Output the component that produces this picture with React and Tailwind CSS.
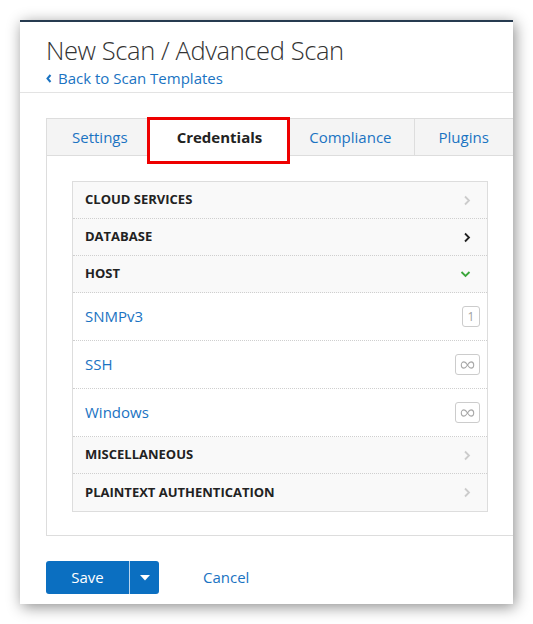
import React from 'react';

const font = { fontFamily: '"Open Sans", "Noto Sans", sans-serif' };

const ChevronRight = ({ color }) => (
  <svg width="8" height="11" viewBox="0 0 8 11" className="block">
    <polyline points="2,1.5 6,5.5 2,9.5" fill="none" stroke={color} strokeWidth="1.8" />
  </svg>
);

const ChevronDown = () => (
  <svg width="11" height="8" viewBox="0 0 11 8" className="block">
    <polyline points="1.5,2 5.5,6 9.5,2" fill="none" stroke="#3aa63a" strokeWidth="1.8" />
  </svg>
);

const Infinity = () => (
  <svg width="15" height="8" viewBox="0 0 16 9" className="block">
    <path
      d="M8 4.5 C6.5 2 5.5 1 4 1 C2.2 1 1 2.5 1 4.5 C1 6.5 2.2 8 4 8 C5.5 8 6.5 7 8 4.5 C9.5 2 10.5 1 12 1 C13.8 1 15 2.5 15 4.5 C15 6.5 13.8 8 12 8 C10.5 8 9.5 7 8 4.5 Z"
      fill="none"
      stroke="#a8a8a8"
      strokeWidth="1.2"
    />
  </svg>
);

const sections = [
  { type: 'head', label: 'CLOUD SERVICES', icon: 'off' },
  { type: 'head', label: 'DATABASE', icon: 'on' },
  { type: 'head', label: 'HOST', icon: 'open' },
  { type: 'item', label: 'SNMPv3', badge: '1' },
  { type: 'item', label: 'SSH', badge: 'inf' },
  { type: 'item', label: 'Windows', badge: 'inf' },
  { type: 'head', label: 'MISCELLANEOUS', icon: 'off' },
  { type: 'head', label: 'PLAINTEXT AUTHENTICATION', icon: 'off', last: true },
];

const tabs = [
  { label: 'Settings', pad: 'pl-[25px] pr-[20px]' },
  { label: 'Credentials', pad: 'pl-[28px] pr-[27px]', active: true },
  { label: 'Compliance', pad: 'pl-[19px] pr-[22px]' },
  { label: 'Plugins', pad: 'pl-[24px] pr-[25px]' },
];

export default function App() {
  return (
    <div className="w-[533px] h-[624px] bg-white p-5" style={font}>
      <div className="h-full bg-white border-t-2 border-[#263b50] shadow-[2px_3px_14px_rgba(0,0,0,0.45)] overflow-hidden flex flex-col">
        <div className="pl-[26px] pt-[10px] pb-[4px] border-b border-[#e3e3e3]">
          <h1 className="text-[25.5px] font-light text-[#333] leading-[36px] tracking-[-0.4px]">New Scan / Advanced Scan</h1>
          <a className="flex items-center gap-[6px] text-[15px] text-[#1a73c2] leading-[20px]">
            <svg width="6" height="9" viewBox="0 0 6 9" className="block">
              <polyline points="4.5,1 1.5,4.5 4.5,8" fill="none" stroke="#1a73c2" strokeWidth="2" />
            </svg>
            Back to Scan Templates
          </a>
        </div>

        <div className="pl-[26px] pt-[25px]">
          <div className="flex w-[520px] border-t border-l border-[#dddddd] bg-[#f4f4f4]">
            {tabs.map((t) => (
              <div
                key={t.label}
                className={
                  t.active
                    ? 'relative h-[37px] flex items-center bg-white text-[15px] font-bold text-[#222] border-r border-[#dddddd] ' + t.pad
                    : 'h-[37px] flex items-center text-[15px] text-[#1a73c2] border-r border-b border-[#dddddd] ' + t.pad
                }
              >
                {t.label}
                {t.active && (
                  <div className="absolute left-[-2px] right-[-1px] top-[-2px] bottom-[-8px] border-[3px] border-[#ee0000]" />
                )}
              </div>
            ))}
            <div className="flex-1 border-b border-[#dddddd]" />
          </div>

          <div className="w-[520px] border-l border-b border-[#dddddd] pl-[25px] pt-[25px] pb-[23px]">
            <div className="w-[416px] border border-[#dddddd]">
              {sections.map((s) => {
                const divider = s.last ? '' : ' border-b border-dotted border-[#cfcfcf]';
                if (s.type === 'head') {
                  return (
                    <div key={s.label} className={'h-[37px] bg-[#f9f9f9] flex items-center justify-between pl-[12px] pr-[16px] text-[13px] font-bold text-[#222]' + divider}>
                      <span>{s.label}</span>
                      {s.icon === 'open' ? (
                        <ChevronDown />
                      ) : (
                        <ChevronRight color={s.icon === 'on' ? '#222' : '#cccccc'} />
                      )}
                    </div>
                  );
                }
                return (
                  <div key={s.label} className={'h-[48px] bg-white flex items-center justify-between pl-[12px] pr-[7px] text-[15px] text-[#1a73c2]' + divider}>
                    <span>{s.label}</span>
                    {s.badge === '1' ? (
                      <span className="w-[18px] h-[21px] flex items-center justify-center border border-[#cccccc] rounded-[3px] text-[12px] text-[#a0a0a0]">1</span>
                    ) : (
                      <span className="w-[25px] h-[21px] flex items-center justify-center border border-[#cccccc] rounded-[3px]">
                        <Infinity />
                      </span>
                    )}
                  </div>
                );
              })}
            </div>
          </div>

          <div className="flex items-center mt-[25px]">
            <div className="flex h-[33px] rounded-[3px] bg-[#0b6fc1] text-white overflow-hidden">
              <button className="w-[84px] text-[15px] border-r border-[#b9d5ee]">Save</button>
              <button className="w-[29px] flex items-center justify-center">
                <svg width="10" height="6" viewBox="0 0 10 6" className="block">
                  <polygon points="0,0 10,0 5,5.5" fill="#ffffff" />
                </svg>
              </button>
            </div>
            <a className="ml-[44px] text-[15px] text-[#1a73c2]">Cancel</a>
          </div>
        </div>
      </div>
    </div>
  );
}
